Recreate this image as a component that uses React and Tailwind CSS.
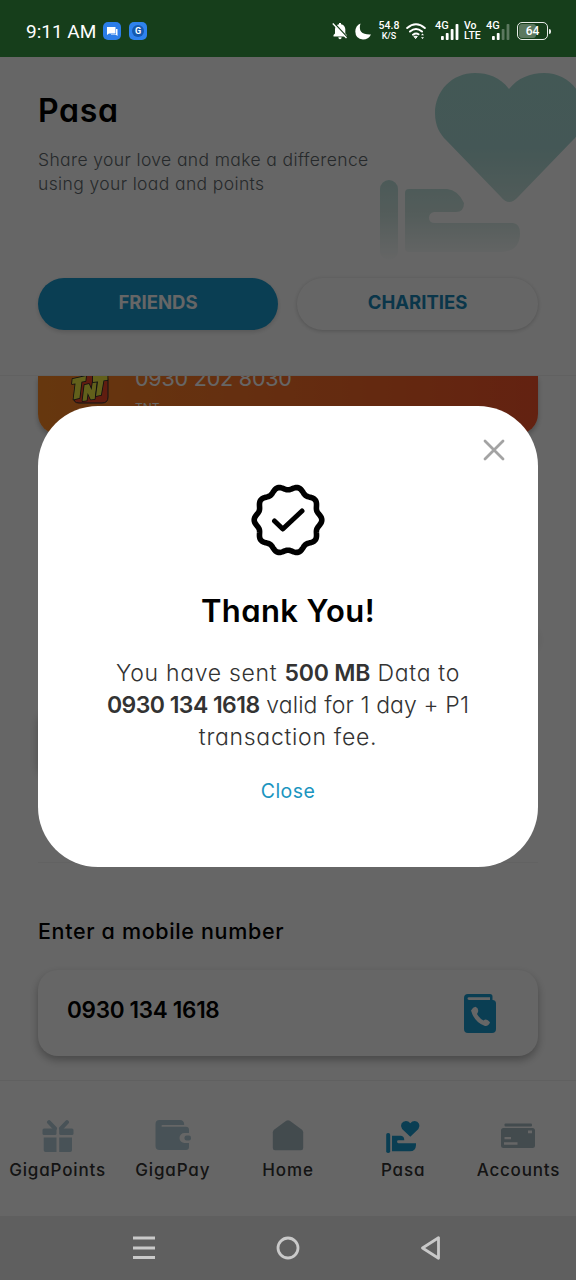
import { useId } from 'react'

const tabs = [
  { label: 'GigaPoints', icon: GiftIcon, text: 'tracking-[0.85px]' },
  { label: 'GigaPay', icon: WalletIcon, text: 'tracking-[0.85px]' },
  { label: 'Home', icon: HomeIcon, text: 'tracking-[0.9px]' },
  { label: 'Pasa', icon: PasaIcon, text: 'tracking-[0.9px]' },
  { label: 'Accounts', icon: AccountsIcon, text: 'tracking-[0.8px]' },
]

function GiftIcon() {
  return (
    <svg className="w-8 h-8" viewBox="0 0 32 32" fill="#b4cdd9">
      <rect x="0.5" y="8.5" width="14" height="6.5" rx="1.5" />
      <rect x="17.2" y="8.5" width="14.3" height="6.5" rx="1.5" />
      <path d="M1.7 17.5h12.8V32H3.5q-1.800 0-1.800-1.800zM17.200 17.500h12.800v12.700q0 1.800-1.800 1.800H17.200z" />
      <path d="M7 2.200L13 8.500M25 2.200L19 8.500" stroke="#b4cdd9" strokeWidth="4" strokeLinecap="round" />
    </svg>
  )
}

function WalletIcon() {
  return (
    <svg className="w-9 h-8" viewBox="0 0 36 32" fill="#b4cdd9">
      <path
        fillRule="evenodd"
        d="M4.500 0H25q4 0 4.200 4.500V5H7.500q-1 0-1 .9t1 .9H31q3 0 3 3V13h-4.500a5 5 0 0 0 0 10H34v4q0 3-3 3H4.500Q.5 30 .5 26V4Q.5 0 4.500 0z"
      />
      <rect x="29.500" y="15.500" width="6.500" height="5" rx="2" />
    </svg>
  )
}

function HomeIcon() {
  return (
    <svg className="w-8 h-8" viewBox="0 0 32 32" fill="#a8bbc4">
      <path d="M14.200.8q1.800-1.300 3.600 0L30 9.800q1.200 1 1.200 2.500V28q0 2.200-2.200 2.200H3Q.8 30.200.8 28V12.300q0-1.500 1.200-2.500z" />
    </svg>
  )
}

function PasaIcon() {
  return (
    <svg className="w-9 h-8 overflow-visible" viewBox="0 0 36 32" fill="#1a9bd0">
      <path d="M25.300 16.800L17.100 8.900Q15.200 6.200 16.500 3.600Q18 1.100 20.900 1.100Q23.600 1.100 25.300 3.300Q27 1.100 29.800 1.100Q32.700 1.100 34 3.700Q35.300 6.300 33.400 8.900z" />
      <rect x="1.200" y="13" width="4" height="20" rx="1.800" />
      <path d="M7 15.800h9q3.300.3 3.300 4.500H13.500a1.300 1.300 0 0 0 0 2.900h17.500v2q-.3 6-6 6H7z" />
    </svg>
  )
}

function AccountsIcon() {
  return (
    <svg className="w-9 h-8" viewBox="0 0 36 32" fill="#a8bbc4">
      <rect x="4.500" y="3.500" width="27.500" height="3" rx="1" />
      <path
        fillRule="evenodd"
        d="M3.500 8h29q2.500 0 2.500 2.500v15q0 2.500-2.500 2.500h-29Q1 28 1 25.500v-15Q1 8 3.500 8zM28 10.500v2.800h4v-2.800zM4.500 17v2.300H11V17zM4 22.300v2.500h13.500v-2.500z"
      />
    </svg>
  )
}

function HandHeart() {
  const id = useId()
  return (
    <svg className="absolute right-0 top-0 w-[200px] h-[210px]" viewBox="376 57 200 210">
      <defs>
        <linearGradient id={id} gradientUnits="userSpaceOnUse" x1="0" y1="73" x2="0" y2="262">
          <stop offset="0" stopColor="#a8dbd5" />
          <stop offset="0.4" stopColor="#abdad6" />
          <stop offset="0.75" stopColor="#d2e8e3" />
          <stop offset="1" stopColor="#ffffff" />
        </linearGradient>
      </defs>
      <g fill={`url(#${id})`}>
        <path d="M509 89C500 77 488 73 475 73C452 73 435 91 435 113C435 126 440 134 446 140L501 197Q509 207 518 197L573 140C580 133 584 125 584 113C584 91 567 73 544 73C530 73 518 78 509 89Z" />
        <rect x="380" y="180" width="18" height="80" rx="9" />
        <path d="M409 189H447Q458 190 464 203Q464 212 456 212H434Q429 213 429 218Q429 223 435 223H513Q520 224 520 233Q520 252 500 252H409Q405 252 405 248V193Q405 189 409 189Z" />
      </g>
    </svg>
  )
}

function TntLogo() {
  return (
    <svg className="w-10 h-10" viewBox="0 0 40 40">
      <path d="M12 1h20q6 0 6 6v16q0 6-6 6H9q-6 0-5-6z" fill="#f04a28" stroke="#2b2f38" />
      <g fill="#f5ef45" stroke="#22262b" strokeWidth="1.600" strokeLinejoin="round" paintOrder="stroke">
        <path d="M2.500 5L16 2l-.5 5-4 .8L9.500 24l-6 1.500L5.500 9.500 2 10z" />
        <path d="M14.500 11l4.500-1 2.500 6 1.200-7.500 4-.5-2 17-4 .5-3-6.500-1 7.500-4.200.5z" />
        <path d="M23 1.500L37.500 0v6l-4 .5L31 21l-5 1 2-14.500-5 .5z" />
      </g>
    </svg>
  )
}

function PhonebookIcon() {
  return (
    <svg className="w-8 h-10" viewBox="0 0 32 40">
      <path
        fillRule="evenodd"
        fill="#1a9bd0"
        d="M4 0h22q2.500 0 2.500 2.500V6Q32 6 32 9.500V35q0 4-4 4H4q-4 0-4-4V4Q0 0 4 0zM5 3.200Q3.500 3.200 3.500 4.600T5 6h21V3.200z"
      />
      <path
        fill="#fff"
        d="M7 16.500Q9 13 11.500 12.800Q15 14.500 14 18L13 20Q15.500 24.500 19.500 26.500Q22.500 23.800 26 28.300Q24.500 32.500 21 32Q10.500 28.500 7 16.500z"
      />
    </svg>
  )
}

// 10 soft lobes around (40, 40)
const sealPath =
  Array.from({ length: 181 }, (_, i) => {
    const a = (i * Math.PI) / 90
    const r = 32 + 1.8 * Math.cos(10 * a)
    return `${i ? 'L' : 'M'}${(40 + r * Math.cos(a)).toFixed(2)} ${(40 + r * Math.sin(a)).toFixed(2)}`
  }).join('') + 'Z'

function SealCheck() {
  return (
    <svg className="w-20 h-20" viewBox="0 0 80 80" fill="none" stroke="#000" strokeLinecap="round" strokeLinejoin="round">
      <path d={sealPath} strokeWidth="5.600" />
      <path d="M26.500 41L34.800 49L54 31" strokeWidth="5" />
    </svg>
  )
}

function Signal({ bars }) {
  return (
    <svg className="absolute left-[5px] top-[3px] w-[18px] h-4" viewBox="0 0 18 16" fill="#fff">
      <rect x="0" y="12" width="2.800" height="4" rx="0.800" />
      <rect x="4.800" y="9" width="2.800" height="7" rx="0.800" />
      <rect x="9.700" y="5" width="2.800" height="11" rx="0.800" opacity={bars > 2 ? 1 : 0.3} />
      <rect x="14.600" y="0" width="2.800" height="16" rx="0.800" opacity={bars > 2 ? 1 : 0.3} />
    </svg>
  )
}

function Network({ bars }) {
  return (
    <div className="relative w-6 h-5">
      <span className="absolute -left-px -top-px text-[11px] leading-[12px] font-medium">4G</span>
      <Signal bars={bars} />
    </div>
  )
}

function StatusBar() {
  return (
    <div className="relative z-20 h-[57px] shrink-0 bg-[#163e1b] text-white font-['Roboto',sans-serif] flex items-center justify-between pl-[26px] pr-[25px] pt-[5px]">
      <div className="flex items-center">
        <span className="text-[19px] leading-6 pt-px w-[70px] whitespace-nowrap">9:11 AM</span>
        <div className="ml-[7px] w-[18px] h-[18px] rounded-[5px] bg-[#2b7de9] flex items-center justify-center">
          <svg className="w-3 h-3" viewBox="0 0 12 12" fill="#fff">
            <path d="M1 2h8.500v6.500H3L1 10zM10 4h1.500v7L9.500 9.500H5V9h5z" />
          </svg>
        </div>
        <div className="ml-2 w-[18px] h-[18px] rounded-[5px] bg-[#2f82ee] flex items-center justify-center">
          <span className="w-3 h-3 rounded-full bg-[#1559b0] text-[9px] leading-3 font-bold text-center">G</span>
        </div>
      </div>
      <div className="flex items-center">
        <svg className="w-4 h-[18px]" viewBox="0 0 16 18">
          <path d="M1.500 14.500V13L3 11.500V7Q3.500 3 7 2.300V1h2v1.300Q12.800 3 13.300 7v4.500l1.500 1.500v1.500zM6.300 15.300h3.400Q9.500 17.300 8 17.300T6.300 15.300z" fill="#fff" />
          <path d="M1.800.8L15.500 15.500" stroke="#163e1b" strokeWidth="1.500" />
          <path d="M.8 1.500L14.500 16" stroke="#fff" strokeWidth="1.400" />
        </svg>
        <svg className="ml-[7px] w-4 h-[17px]" viewBox="0 0 16 17" fill="#fff">
          <path d="M5.500.5Q2 12 16 11.500Q13.500 16.500 8 16.500Q.5 16 .3 8.500Q.5 2.500 5.500.5z" />
        </svg>
        <div className="ml-[7px] w-[22px] text-center leading-[10px] font-medium">
          <div className="text-[10.500px]">54.8</div>
          <div className="text-[9px]">K/S</div>
        </div>
        <svg className="ml-[6px] w-5 h-[17px]" viewBox="0 0 20 17" fill="none" stroke="#fff" strokeWidth="2" strokeLinecap="round">
          <path d="M1.200 5Q10-2.500 18.800 5M4 8.500Q10 3.500 16 8.500M7 11.700Q10 9.500 12.500 11.300" />
          <path d="M8.300 13.300h3L9.800 15.300z" fill="#fff" strokeWidth="1" />
          <path d="M15 12.200l1.500-1.700 1.500 1.700zM15 14.300l1.500 1.700 1.500-1.700z" fill="#fff" stroke="none" />
        </svg>
        <div className="ml-[10px]">
          <Network bars={4} />
        </div>
        <div className="ml-[4px] w-[18px] leading-[10px] text-[10.500px] font-medium">
          <div>Vo</div>
          <div>LTE</div>
        </div>
        <div className="ml-[5px]">
          <Network bars={2} />
        </div>
        <div className="ml-[6px] relative w-[31px] h-[18px] rounded-[5px] border-[1.500px] border-white/90 overflow-hidden">
          <div className="absolute inset-y-[1px] left-[1px] w-[17px] rounded-[3px] bg-white/30" />
          <span className="relative block text-center text-[12px] leading-4 font-medium">64</span>
        </div>
        <div className="ml-[1px] w-[2px] h-[5px] rounded-r bg-white/90" />
      </div>
    </div>
  )
}

function ThankYouModal() {
  return (
    <div className="absolute z-10 left-[38px] top-[406px] w-[500px] h-[461px] rounded-[60px] bg-white flex flex-col items-center">
      <svg className="absolute left-[445px] top-[33px] w-[22px] h-[22px]" viewBox="0 0 22 22" stroke="#a3a3a3" strokeWidth="2.800" strokeLinecap="round">
        <path d="M2 2L20 20M20 2L2 20" />
      </svg>
      <div className="mt-[74px]">
        <SealCheck />
      </div>
      <h2 className="mt-[31px] text-[31px] leading-10 font-semibold tracking-[0.400px] whitespace-nowrap">Thank You!</h2>
      <div className="mt-[26px] text-[23px] leading-8 font-light text-[#333] text-center whitespace-nowrap">
        <p className="tracking-[0.700px]">
          You have sent <b className="font-semibold tracking-[-0.200px]">500 MB</b> Data to
        </p>
        <p className="tracking-[0.120px]">
          <b className="font-semibold tracking-[-0.550px]">0930 134 1618</b> valid for 1 day + P1
        </p>
        <p className="tracking-[0.700px]">transaction fee.</p>
      </div>
      <button className="mt-[26px] text-[19.500px] leading-6 tracking-[0.400px] text-[#1b95bf]">Close</button>
    </div>
  )
}

export default function App() {
  return (
    <div className="relative w-[576px] h-[1280px] overflow-hidden bg-white flex flex-col font-['Inter','Open_Sans',sans-serif] text-black [font-feature-settings:'cv11'_1]">
      <StatusBar />
      <header className="relative h-[319px] shrink-0 px-[38px] pt-[34px] border-b border-[#f3f3f3] bg-white">
        <HandHeart />
        <h1 className="text-[32px] leading-10 font-semibold tracking-[0.700px]">Pasa</h1>
        <p className="mt-[17px] text-[17.500px] leading-6 font-light tracking-[0.380px] text-[#60686c] whitespace-nowrap">
          Share your love and make a difference
          <br />
          using your load and points
        </p>
        <div className="mt-[82px] flex gap-[19px]">
          <button className="w-60 h-[52px] pb-[3px] rounded-full bg-[#1a9bd0] text-white text-[18.500px] font-bold shadow-[0_2px_4px_rgba(0,0,0,0.15)]">
            FRIENDS
          </button>
          <button className="w-[241px] h-[52px] pb-[3px] rounded-full bg-white text-[#1a87b8] text-[18.500px] font-bold shadow-[0_1px_4px_rgba(0,0,0,0.2)]">
            CHARITIES
          </button>
        </div>
      </header>

      <main className="h-[704px] shrink-0 px-[38px] overflow-hidden">
        <div className="h-[58px] rounded-b-[20px] bg-gradient-to-r from-[#ff8a25] to-[#f8542b] text-white flex shadow-[0_3px_5px_rgba(0,0,0,0.25)]">
          <div className="ml-[32px] w-10 -mt-[2px]">
            <TntLogo />
          </div>
          <div className="ml-[25px] -mt-[12px]">
            <p className="text-[21.500px] leading-7 tracking-[-0.200px]">0930 202 8030</p>
            <p className="mt-[8px] text-[12px] leading-4">TNT</p>
          </div>
        </div>
        <div className="mt-[190px] h-[32px] ml-auto w-40 rounded-2xl shadow-[0_0_8px_rgba(0,0,0,0.100)]" />
        <div className="mt-[52px] h-[70px] w-36 rounded-2xl shadow-[0_2px_9px_rgba(0,0,0,0.250)]" />
        <div className="mt-[84px] h-px bg-[#f6f6f6]" />
        <h3 className="mt-[54px] text-[21.500px] leading-7 font-medium tracking-[0.650px] whitespace-nowrap">Enter a mobile number</h3>
        <div className="mt-[25px] h-[86px] rounded-[20px] pl-[29px] pr-[42px] flex items-center justify-between shadow-[0_4px_9px_rgba(0,0,0,0.300)]">
          <span className="text-[22.500px] leading-7 pb-[7px] font-semibold tracking-[-0.300px]">0930 134 1618</span>
          <div className="pt-px">
            <PhonebookIcon />
          </div>
        </div>
      </main>

      <nav className="h-[136px] shrink-0 border-t border-[#f1f1f1] bg-white grid grid-cols-5 pt-[39px]">
        {tabs.map(({ label, icon: Icon, text }) => (
          <div key={label} className="flex flex-col items-center">
            <Icon />
            <span className={`mt-[6px] text-[17px] leading-6 font-medium text-[#333] ${text}`}>{label}</span>
          </div>
        ))}
      </nav>

      <div className="absolute inset-0 bg-black/60" />
      <ThankYouModal />

      <div className="relative z-10 h-16 shrink-0 bg-[#5f5f5f]">
        <div className="h-full pl-[132px] pr-[133px] flex items-center justify-between">
          <svg className="w-6 h-6" viewBox="0 0 24 24" fill="#c9c9c9">
            <path d="M1 .5h22v3H1zM1 10.500h22v3H1zM1 20h22v3H1z" />
          </svg>
          <svg className="w-6 h-6" viewBox="0 0 24 24" fill="none" stroke="#c9c9c9" strokeWidth="2.800">
            <circle cx="12" cy="12" r="10" />
          </svg>
          <svg className="w-6 h-6" viewBox="0 0 24 24" fill="none" stroke="#c9c9c9" strokeWidth="2.800" strokeLinejoin="round">
            <path d="M19.500 1.800V22.300L3.500 12z" />
          </svg>
        </div>
      </div>
    </div>
  )
}
